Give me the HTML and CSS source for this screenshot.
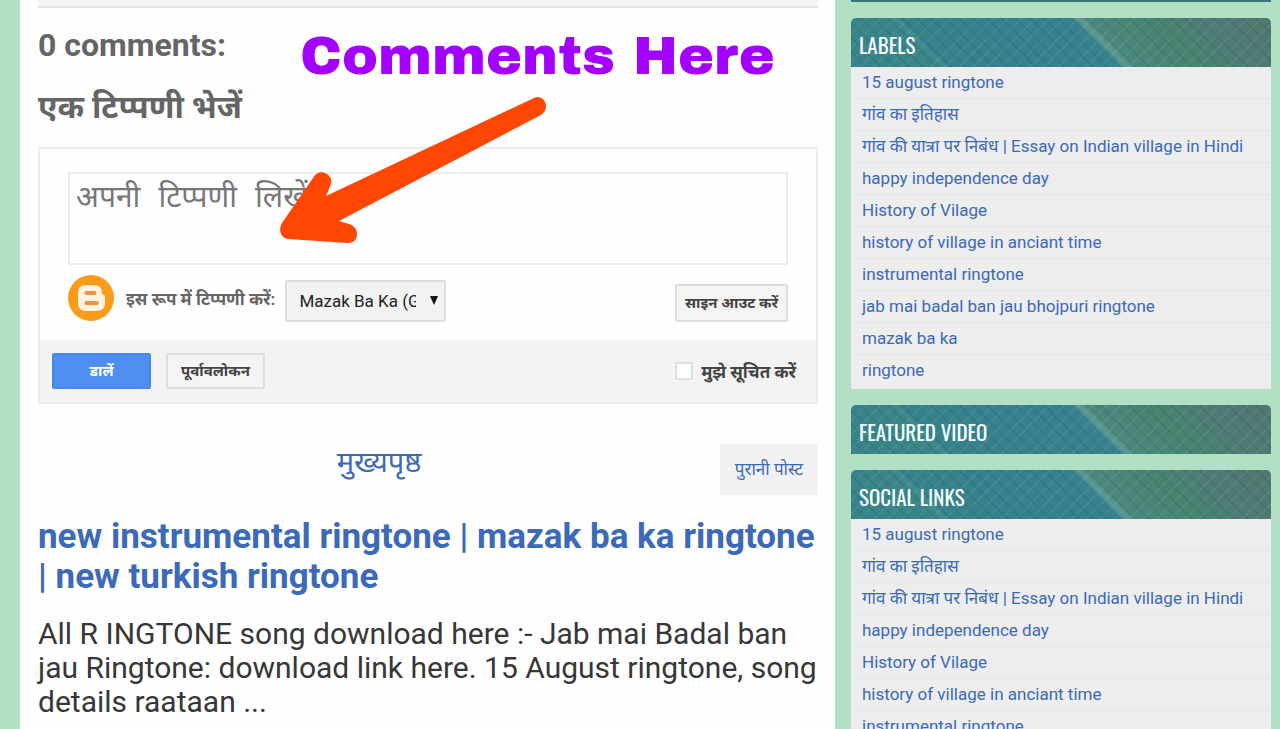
FILE: index.html
```html
<!DOCTYPE html>
<html lang="hi">

<head>
    <meta charset="UTF-8">
    <meta name="viewport" content="width=device-width, initial-scale=1.0">
    <title>Mazak Ba Ka</title>
    <link rel="stylesheet" href="styles.css">
</head>

<body>
    <div class="page">
        <main class="content">
            <div class="post-end"></div>

            <section class="comments">
                <h2>0 comments:</h2>
                <h2>एक टिप्पणी भेजें</h2>

                <form class="comment-form">
                    <div class="form-body">
                        <textarea class="comment-text" placeholder="अपनी टिप्पणी लिखें" aria-label="टिप्पणी"></textarea>
                        <div class="identity">
                            <svg class="avatar" viewBox="0 0 46 46" aria-hidden="true">
                                <circle cx="23" cy="23" r="23" fill="#fb9b1a" />
                                <path d="M18 10h8c5 0 8 3 8 7v1c0 1 1 2 2 2s1 1 1 2v6c0 5-3 8-8 8H18c-5 0-8-3-8-8V18c0-5 3-8 8-8z" fill="#fdf1e2" />
                                <path d="M18.500 18h8M18.500 28h10.500" stroke="#e5973f" stroke-width="4" stroke-linecap="round" />
                            </svg>
                            <label for="identity">इस रूप में टिप्पणी करें:</label>
                            <span class="select-box">
                                <select id="identity">
                                    <option>Mazak Ba Ka (Google)</option>
                                </select>
                            </span>
                            <button type="button" class="button sign-out">साइन आउट करें</button>
                        </div>
                    </div>
                    <div class="form-footer">
                        <button type="submit" class="button primary">डालें</button>
                        <button type="button" class="button preview">पूर्वावलोकन</button>
                        <label class="notify"><input type="checkbox"> मुझे सूचित करें</label>
                    </div>
                </form>

                <div class="callout">
                    <p>Comments Here</p>
                    <svg width="270" height="150" viewBox="0 0 270 150" aria-hidden="true">
                        <path d="M256 2C262 -1 268 4 268 10C268 14 266 17 263 19L61 125L71 128C77 130 79 134 79 138C79 143 76 147 70 147L10 143C3 142 0 134 4 127L35 82C38 76 44 75 49 78C53 81 54 84 53 88L48 100Z" fill="#ff4602" />
                    </svg>
                </div>
            </section>

            <nav class="pager">
                <a href="#" class="home">मुख्यपृष्ठ</a>
                <a href="#" class="older">पुरानी पोस्ट</a>
            </nav>

            <article class="post">
                <h2><a href="#">new instrumental ringtone | mazak ba ka ringtone | new turkish ringtone</a></h2>
                <p>All R INGTONE song download here :- Jab mai Badal ban jau Ringtone: download link here. 15 August ringtone, song details raataan ...</p>
            </article>
        </main>

        <aside class="sidebar">
            <div class="widget-end"></div>

            <section class="widget">
                <h2>LABELS</h2>
                <ul>
                    <li><a href="#">15 august ringtone</a></li>
                    <li><a href="#">गांव का इतिहास</a></li>
                    <li><a href="#">गांव की यात्रा पर निबंध | Essay on Indian village in Hindi</a></li>
                    <li><a href="#">happy independence day</a></li>
                    <li><a href="#">History of Vilage</a></li>
                    <li><a href="#">history of village in anciant time</a></li>
                    <li><a href="#">instrumental ringtone</a></li>
                    <li><a href="#">jab mai badal ban jau bhojpuri ringtone</a></li>
                    <li><a href="#">mazak ba ka</a></li>
                    <li><a href="#">ringtone</a></li>
                </ul>
            </section>

            <section class="widget">
                <h2>FEATURED VIDEO</h2>
            </section>

            <section class="widget">
                <h2>SOCIAL LINKS</h2>
                <ul>
                    <li><a href="#">15 august ringtone</a></li>
                    <li><a href="#">गांव का इतिहास</a></li>
                    <li><a href="#">गांव की यात्रा पर निबंध | Essay on Indian village in Hindi</a></li>
                    <li><a href="#">happy independence day</a></li>
                    <li><a href="#">History of Vilage</a></li>
                    <li><a href="#">history of village in anciant time</a></li>
                    <li><a href="#">instrumental ringtone</a></li>
                </ul>
            </section>
        </aside>
    </div>
</body>

</html>
```
FILE: styles.css
```css
/* Reset and base styles */
* {
    margin: 0;
    padding: 0;
    box-sizing: border-box;
}

body {
    background-color: #b2e0c5;
    color: #373737;
    font-family: Roboto, "Noto Sans", "Noto Sans Devanagari", sans-serif;
}

a {
    color: #3c69b8;
    text-decoration: none;
}

a:hover {
    text-decoration: underline;
}

.page {
    display: grid;
    grid-template-columns: 1fr 420px;
    gap: 16px;
    padding: 0 9px 0 20px;
}

/* Main column */
.content {
    background-color: #fefefe;
    padding: 0 17px 20px 18px;
    min-width: 0;
}

.post-end {
    height: 8px;
    background-color: #f5f5f5;
    border-bottom: 2px solid #e2e2e2;
}

/* Comments */
.comments {
    position: relative;
    padding-top: 15px;
}

.comments h2 {
    font-size: 32px;
    line-height: 44px;
    color: #656565;
    margin-bottom: 18px;
}

.comment-form {
    border: 2px solid #ececec;
}

.form-body {
    padding: 23px 28px 18px;
}

.comment-text {
    display: block;
    width: 100%;
    height: 93px;
    border: 2px solid #ececec;
    background-color: #fefefe;
    padding: 4px 6px;
    font-family: "Liberation Mono", "Noto Sans", "Noto Sans Devanagari", monospace;
    font-size: 30px;
    line-height: 42px;
    resize: none;
}

.comment-text::placeholder {
    color: #777;
}

.identity {
    display: flex;
    align-items: center;
    margin-top: 9px;
    height: 48px;
}

.avatar {
    width: 46px;
    height: 46px;
    margin-right: 12px;
}

.identity label {
    font-size: 17px;
    font-weight: 700;
    color: #666;
}

.select-box {
    position: relative;
    align-self: flex-end;
    width: 161px;
    margin-left: 10px;
}

.select-box::after {
    content: "";
    position: absolute;
    right: 8px;
    top: 16px;
    border: 4px solid transparent;
    border-top: 9px solid #111;
    border-bottom: 0;
    pointer-events: none;
}

.select-box select {
    display: block;
    appearance: none;
    width: 100%;
    height: 42px;
    padding: 0 28px 0 12px;
    border: 2px solid #dcdcdc;
    border-radius: 2px;
    background-color: #f2f2f2;
    color: #222;
    font-family: inherit;
    font-size: 17px;
}

.button {
    height: 36px;
    width: 99px;
    padding-bottom: 2px;
    border: 2px solid #dedede;
    border-radius: 2px;
    background-color: #f4f4f4;
    color: #444;
    font-family: inherit;
    font-size: 15px;
    font-weight: 700;
    cursor: pointer;
}

.button.sign-out {
    align-self: flex-end;
    width: 113px;
    height: 38px;
    margin-left: auto;
}

.button.primary {
    border-color: #4886e8;
    background-color: #4d8eee;
    color: #fff;
}

.form-footer {
    display: flex;
    align-items: center;
    gap: 15px;
    height: 62px;
    padding: 0 20px 0 12px;
    background-color: #f3f3f3;
}

.notify {
    display: flex;
    align-items: center;
    gap: 8px;
    margin-left: auto;
    font-size: 17px;
    font-weight: 700;
    color: #444;
}

.notify input {
    appearance: none;
    width: 18px;
    height: 18px;
    border: 2px solid #e0e0e0;
    background-color: #fff;
}

/* Callout drawn over the comment form */
.callout {
    position: absolute;
    top: 16px;
    left: 262px;
    pointer-events: none;
}

.callout p {
    font-family: "Archivo Black", "DejaVu Sans", sans-serif;
    font-size: 54px;
    font-weight: 400;
    line-height: 64px;
    color: #a200ff;
    white-space: nowrap;
}

.callout svg {
    position: absolute;
    top: 72px;
    left: -22px;
}

/* Pager */
.pager {
    display: grid;
    grid-template-columns: 98px 1fr 98px;
    align-items: start;
    margin-top: 40px;
    text-align: center;
}

.pager .home {
    grid-column: 2;
    margin-right: 98px;
    font-size: 29px;
    line-height: 36px;
}

.pager .older {
    background-color: #f1f1f1;
    font-size: 17px;
    line-height: 51px;
}

/* Post */
.post h2 {
    font-size: 35px;
    line-height: 40px;
    margin-top: 22px;
}

.post p {
    margin-top: 20px;
    font-size: 30px;
    line-height: 34px;
}

/* Sidebar */
.widget-end {
    height: 2px;
    background-color: #38767c;
}

.widget {
    margin-top: 16px;
}

.widget h2 {
    padding: 5px 8px 0;
    border-radius: 5px 5px 0 0;
    background:
        repeating-linear-gradient(45deg, rgba(20, 60, 80, 0.12) 0 2px, transparent 2px 10px),
        repeating-linear-gradient(135deg, rgba(255, 255, 255, 0.06) 0 2px, transparent 2px 10px),
        linear-gradient(45deg, #37838a 0%, #3b8587 19%, #438d92 20%, #36818a 21%, #36818f 57%, #5d9993 59%, #4a887d 61%, #45846f 75%, #4f7a75 85%, #50776f 100%);
    color: #f4ffff;
    font-family: Oswald, "Roboto Condensed", Roboto, sans-serif;
    font-size: 21px;
    font-weight: 400;
    line-height: 44px;
}

.widget ul {
    list-style: none;
    padding: 0 0 2px 7px;
    background-color: #ededed;
}

.widget li {
    height: 32px;
    padding-left: 4px;
    border-bottom: 1px solid #e5e5e5;
    font-size: 17px;
    line-height: 30px;
    white-space: nowrap;
}

.widget li:last-child {
    border-bottom: 0;
}
```
